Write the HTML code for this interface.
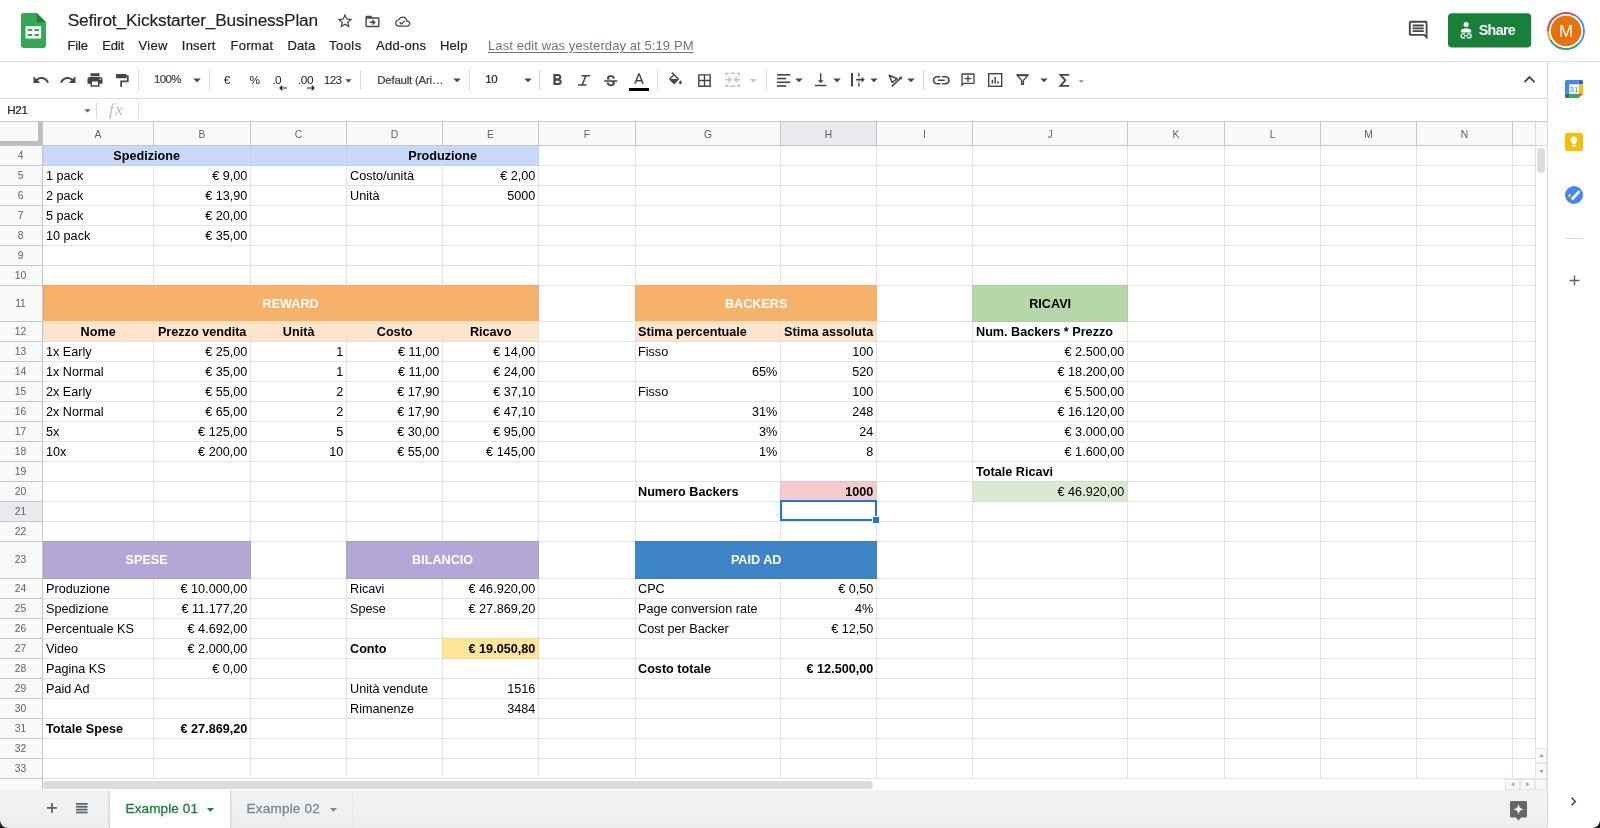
<!DOCTYPE html>
<html lang="en"><head><meta charset="utf-8"><title>Sefirot_Kickstarter_BusinessPlan - Google Sheets</title>
<style>
html,body{margin:0;padding:0}
body{width:1600px;height:828px;overflow:hidden;background:#fff;position:relative;font-family:"Liberation Sans",sans-serif}
.app{position:absolute;left:0;top:0;width:1600px;height:828px;will-change:transform}
.i{position:absolute;display:block;overflow:visible}
.t{position:absolute;white-space:pre;line-height:20px;height:20px}
.sp{position:absolute;top:70px;width:1px;height:20px;background:#dadce0}
.hr{position:absolute;left:0;height:1px;background:#dadce0}
.share{position:absolute;left:1448px;top:13.300px;width:83px;height:34.200px;border-radius:4px;background:#188038}
.sb{position:absolute;background:#f8f9fa;border:1px solid #e3e5e8;box-sizing:border-box}
.tabbar{position:absolute;left:0;top:790px;width:1547px;height:38px;background:linear-gradient(#f1f3f4,#eceef0);overflow:hidden}
.tab1{position:absolute;left:110px;top:0;width:120px;height:38px;background:#fff;box-shadow:0 0 3px rgba(60,64,67,.35)}

.sheet{position:absolute;overflow:hidden;background:#fff}
.sheet div{position:absolute}
.f{box-shadow:inset 0 0 0 1px rgba(0,0,0,.045)}
.hb{background:#f8f9fa}.hs{background:#e8eaed}
.gl{background:#e2e3e3}.hl{background:#c4c7c5}.fz{background:#bdbdbd}
.ch{top:0;height:23px;line-height:25px;text-align:center;font-size:10.3px;color:#5f6368}
.rh{left:0;width:41px;text-align:center;font-size:10.3px;color:#5f6368}
.c{height:19px;line-height:19px;font-size:12.65px;color:#000;white-space:nowrap;box-sizing:border-box;padding:0 2.7px 0 3px}
.al{text-align:left}.ar{text-align:right}.ac{text-align:center}.b{font-weight:700}
.sel{border:2px solid #1a73e8;box-sizing:content-box}
.selh{width:6px;height:6px;background:#1a73e8;border:1px solid #fff;box-sizing:content-box}
</style></head><body><div class="app">
<!-- title bar -->
<svg class="i" style="left:21px;top:13px" width="25" height="35" viewBox="0 0 25 35"><path fill="#34a853" d="M2.4 0H15.700L25 9.300V32.600a2.400 2.400 0 0 1-2.400 2.400H2.400A2.400 2.400 0 0 1 0 32.600V2.400A2.400 2.400 0 0 1 2.400 0z"/><path fill="#188038" d="M15.700 0L25 9.300H17.300a1.600 1.600 0 0 1-1.600-1.600z"/><path fill="#fff" d="M4.600 13.200H20.100V25.400H4.600zM6.700 16h4.600v2H6.700zm6.900 0h4.500v2h-4.500zM6.700 20.900h4.600v2.100H6.700zm6.900 0h4.500v2.100h-4.500z" fill-rule="evenodd"/></svg>
<span class="t" style="left:67.70px;top:9.91px;font-size:17.3px;color:#202124;letter-spacing:-0.162px;-webkit-text-stroke:.15px #202124;">Sefirot_Kickstarter_BusinessPlan</span>
<svg class="i" style="left:335.90px;top:12.40px" width="18" height="18" viewBox="0 0 24 24"><path fill="#444746" d="M22 9.24l-7.19-.62L12 2 9.19 8.63 2 9.24l5.46 4.73L5.82 21 12 17.27 18.18 21l-1.63-7.03L22 9.240zM12 15.400l-3.760 2.270 1-4.280-3.320-2.880 4.380-.38L12 6.100l1.710 4.040 4.380.38-3.320 2.880 1 4.280L12 15.400z"/></svg>
<svg class="i" style="left:364.10px;top:12.50px" width="17" height="17" viewBox="0 0 24 24"><path fill="#444746" d="M20 6h-8l-2-2H4c-1.1 0-1.990.9-1.990 2L2 18c0 1.100.9 2 2 2h16c1.100 0 2-.9 2-2V8c0-1.100-.9-2-2-2zm0 12H4V8h16v10zm-7.500-1l4-4-4-4-1.410 1.410L12.670 12H8v2h4.670l-1.580 1.590L12.500 17z"/></svg>
<svg class="i" style="left:394.60px;top:13.80px" width="15.4" height="15.4" viewBox="0 0 24 24"><path fill="#444746" d="M19.350 10.040C18.670 6.590 15.640 4 12 4 9.110 4 6.600 5.640 5.350 8.040 2.340 8.360 0 10.910 0 14c0 3.310 2.690 6 6 6h13c2.760 0 5-2.240 5-5 0-2.640-2.050-4.780-4.650-4.960zM19 18H6c-2.210 0-4-1.790-4-4 0-2.050 1.530-3.760 3.560-3.970l1.070-.11.500-.95C8.080 7.140 9.940 6 12 6c2.620 0 4.880 1.860 5.390 4.430l.3 1.500 1.530.11c1.560.1 2.780 1.410 2.780 2.960 0 1.650-1.350 3-3 3zm-9-3.820l-2.090-2.090L6.500 13.500 10 17l6.010-6.010-1.410-1.410z"/></svg>
<span class="t" style="left:67.40px;top:35.80px;font-size:13px;color:#202124;letter-spacing:-0.138px;-webkit-text-stroke:.2px #202124;">File</span>
<span class="t" style="left:102.30px;top:35.80px;font-size:13px;color:#202124;letter-spacing:-0.177px;-webkit-text-stroke:.2px #202124;">Edit</span>
<span class="t" style="left:138.60px;top:35.80px;font-size:13px;color:#202124;letter-spacing:0.262px;-webkit-text-stroke:.2px #202124;">View</span>
<span class="t" style="left:181.80px;top:35.80px;font-size:13px;color:#202124;letter-spacing:0.231px;-webkit-text-stroke:.2px #202124;">Insert</span>
<span class="t" style="left:230.40px;top:35.80px;font-size:13px;color:#202124;letter-spacing:0.305px;-webkit-text-stroke:.2px #202124;">Format</span>
<span class="t" style="left:287.50px;top:35.80px;font-size:13px;color:#202124;letter-spacing:0.058px;-webkit-text-stroke:.2px #202124;">Data</span>
<span class="t" style="left:329.00px;top:35.80px;font-size:13px;color:#202124;letter-spacing:0.468px;-webkit-text-stroke:.2px #202124;">Tools</span>
<span class="t" style="left:376.00px;top:35.80px;font-size:13px;color:#202124;letter-spacing:0.268px;-webkit-text-stroke:.2px #202124;">Add-ons</span>
<span class="t" style="left:440.00px;top:35.80px;font-size:13px;color:#202124;letter-spacing:0.213px;-webkit-text-stroke:.2px #202124;">Help</span>
<span class="t" style="left:488.00px;top:35.80px;font-size:13px;color:#70757a;letter-spacing:0.096px;text-decoration:underline;text-underline-offset:2px;">Last edit was yesterday at 5:19 PM</span>
<svg class="i" style="left:1406.80px;top:19.00px" width="22.4" height="22.4" viewBox="0 0 24 24"><path fill="#444746" d="M21.990 4c0-1.100-.89-2-1.990-2H4c-1.100 0-2 .9-2 2v12c0 1.100.9 2 2 2h14l4 4-.01-18zM20 4v13.170L18.830 16H4V4h16zM6 12h12v2H6zm0-3h12v2H6zm0-3h12v2H6z"/></svg>
<svg class="i" style="left:1448px;top:13px" width="84" height="36" viewBox="0 0 84 36"><rect x="0" y=".3" width="83.200" height="34.300" rx="4" fill="#188038"/></svg>
<svg class="i" style="left:1459.80px;top:22.00px" width="12.2" height="16.8" viewBox="0 0 13 18"><circle cx="6.500" cy="2.700" r="2.700" fill="#fff"/><path fill="#fff" d="M1 11.300V9.600c0-1.900 3.700-2.900 5.500-2.900s5.500 1 5.500 2.900v1.700z"/><path fill="none" stroke="#fff" stroke-width="1.300" d="M5.300 12.800H3.300a2.150 2.150 0 0 0 0 4.300h2M7.700 12.800h2a2.150 2.150 0 0 1 0 4.300h-2M4.300 14.950h4.400"/></svg>
<span class="t" style="left:1478.80px;top:20.45px;font-size:14.3px;font-weight:700;color:#fff;letter-spacing:-0.710px;">Share</span>
<svg class="i" style="left:1546.70px;top:11.90px" width="38" height="38" viewBox="0 0 38 38"><circle cx="19" cy="19" r="18" fill="none" stroke="#4285f4" stroke-width="1.700"/><path d="M3.410 28A18 18 0 0 1 1 19" fill="none" stroke="#fbbc04" stroke-width="1.700"/><path d="M1 19A18 18 0 0 1 28 3.410" fill="none" stroke="#ea4335" stroke-width="1.700"/><path d="M31.700 31.700A18 18 0 0 1 3.410 28" fill="none" stroke="#34a853" stroke-width="1.700"/><circle cx="19" cy="19" r="15.200" fill="#e8710a"/><text x="19" y="25" text-anchor="middle" font-family="Liberation Sans, sans-serif" font-size="17" fill="#fff">M</text></svg>
<div class="hr" style="top:61px;width:1600px"></div>
<!-- toolbar -->
<svg class="i" style="left:31.60px;top:70.80px" width="18" height="18" viewBox="0 0 24 24"><path fill="#444746" d="M12.5 8c-2.65 0-5.05.99-6.9 2.6L2 7v9h9l-3.62-3.62c1.39-1.16 3.16-1.88 5.12-1.88 3.54 0 6.55 2.31 7.6 5.5l2.37-.78C21.08 11.03 17.15 8 12.5 8z"/></svg>
<svg class="i" style="left:58.70px;top:70.80px" width="18" height="18" viewBox="0 0 24 24"><path fill="#444746" d="M18.4 10.6C16.55 8.99 14.15 8 11.5 8c-4.65 0-8.58 3.03-9.96 7.22L3.9 16c1.05-3.19 4.05-5.5 7.6-5.5 1.95 0 3.73.72 5.12 1.88L13 16h9V7l-3.6 3.6z"/></svg>
<svg class="i" style="left:85.50px;top:71.00px" width="18" height="18" viewBox="0 0 24 24"><path fill="#444746" d="M19 8H5c-1.66 0-3 1.34-3 3v6h4v4h12v-4h4v-6c0-1.66-1.34-3-3-3zm-3 11H8v-5h8v5zm3-7c-.55 0-1-.45-1-1s.45-1 1-1 1 .45 1 1-.45 1-1 1zm-1-9H6v4h12V3z"/></svg>
<svg class="i" style="left:115.60px;top:73.50px" width="12.6" height="13.1" viewBox="0 0 12.600 13.100"><rect x="0" y="0" width="10.700" height="4.200" rx=".7" fill="#444746"/><path d="M10.600 2.100H11.800V7.300H5.100V13.100" fill="none" stroke="#444746" stroke-width="1.700"/></svg>
<div class="sp" style="left:138px"></div>
<span class="t" style="left:154.00px;top:68.92px;font-size:11.5px;color:#3c4043;letter-spacing:-0.680px;-webkit-text-stroke:.2px #3c4043;">100%</span>
<svg class="i" style="left:188.00px;top:71.33px" width="18" height="18" viewBox="0 0 24 24"><path fill="#444746" d="M7 10l5 5 5-5z"/></svg>
<div class="sp" style="left:209px"></div>
<span class="t" style="left:223.70px;top:70.21px;font-size:11.8px;color:#202124;">€</span>
<span class="t" style="left:249.50px;top:70.21px;font-size:11.8px;color:#202124;letter-spacing:-2.400px;">%</span>
<span class="t" style="left:272.50px;top:70.21px;font-size:11.8px;color:#202124;letter-spacing:-0.672px;">.0</span>
<span class="t" style="left:298.00px;top:70.21px;font-size:11.8px;color:#202124;letter-spacing:-0.469px;">.00</span>
<svg class="i" style="left:279.20px;top:84.60px" width="8" height="6" viewBox="0 0 8 6"><path d="M8 3H1M3.300 .8L1 3l2.300 2.200" fill="none" stroke="#202124" stroke-width="1.200"/></svg>
<svg class="i" style="left:307.30px;top:84.60px" width="8" height="6" viewBox="0 0 8 6"><path d="M0 3H7M4.700 .8L7 3 4.700 5.200" fill="none" stroke="#202124" stroke-width="1.200"/></svg>
<span class="t" style="left:323.80px;top:70.21px;font-size:11.8px;color:#202124;letter-spacing:-0.729px;">123</span>
<svg class="i" style="left:340.50px;top:73.29px" width="15" height="15" viewBox="0 0 24 24"><path fill="#444746" d="M7 10l5 5 5-5z"/></svg>
<div class="sp" style="left:360px"></div>
<span class="t" style="left:377.20px;top:70.22px;font-size:11.5px;color:#3c4043;letter-spacing:-0.233px;-webkit-text-stroke:.2px #3c4043;">Default (Ari…</span>
<svg class="i" style="left:447.50px;top:71.33px" width="18" height="18" viewBox="0 0 24 24"><path fill="#444746" d="M7 10l5 5 5-5z"/></svg>
<div class="sp" style="left:469px"></div>
<span class="t" style="left:485.30px;top:68.92px;font-size:11.5px;color:#202124;letter-spacing:-0.548px;-webkit-text-stroke:.2px #202124;">10</span>
<svg class="i" style="left:518.80px;top:71.33px" width="18" height="18" viewBox="0 0 24 24"><path fill="#444746" d="M7 10l5 5 5-5z"/></svg>
<div class="sp" style="left:539px"></div>
<svg class="i" style="left:547.65px;top:71.25px" width="18.5" height="18.5" viewBox="0 0 24 24"><path fill="#444746" d="M15.6 10.79c.97-.67 1.65-1.77 1.65-2.79 0-2.26-1.75-4-4-4H7v14h7.04c2.09 0 3.71-1.7 3.71-3.79 0-1.52-.86-2.82-2.15-3.42zM10 6.5h3c.83 0 1.5.67 1.5 1.5s-.67 1.5-1.5 1.5h-3v-3zm3.5 9H10v-3h3.5c.83 0 1.5.67 1.5 1.5s-.67 1.5-1.5 1.5z"/></svg>
<svg class="i" style="left:578.00px;top:74.70px" width="12" height="10.8" viewBox="0 0 12 10.800"><path d="M3.500 .8H12M0 10H8.500M7.900 .8L4.100 10" fill="none" stroke="#444746" stroke-width="1.600"/></svg>
<svg class="i" style="left:602.05px;top:72.75px" width="17.5" height="17.5" viewBox="0 0 24 24"><path fill="#444746" d="M7.24 8.75c-.26-.48-.39-1.03-.39-1.67 0-.61.13-1.16.4-1.67.26-.5.63-.93 1.11-1.29.48-.35 1.05-.63 1.7-.83.66-.19 1.39-.29 2.18-.29.81 0 1.54.11 2.21.34.66.22 1.23.54 1.69.94.47.4.83.88 1.08 1.43.25.55.38 1.15.38 1.81h-3.01c0-.31-.05-.59-.15-.85-.09-.27-.24-.49-.44-.68-.2-.19-.45-.33-.75-.44-.3-.1-.66-.16-1.06-.16-.39 0-.74.04-1.03.13-.29.09-.53.21-.72.36-.19.16-.34.34-.44.55-.1.21-.15.43-.15.66 0 .48.25.88.74 1.21.38.25.77.48 1.41.7H7.39c-.05-.08-.11-.17-.15-.25zM21 12v-2H3v2h9.62c.18.07.4.14.55.2.37.17.66.34.87.51.21.17.35.36.43.57.07.2.11.43.11.69 0 .23-.05.45-.14.66-.09.2-.23.38-.42.53-.19.15-.42.26-.71.35-.29.08-.63.13-1.01.13-.43 0-.83-.04-1.18-.13s-.66-.23-.91-.42c-.25-.19-.45-.44-.59-.75-.14-.31-.25-.76-.25-1.21H6.4c0 .55.08 1.13.24 1.58.16.45.37.85.65 1.21.28.35.6.66.98.92.37.26.78.48 1.22.65.44.17.9.3 1.38.39.48.08.96.13 1.44.13.8 0 1.53-.09 2.18-.28s1.21-.45 1.67-.79c.46-.34.82-.77 1.07-1.27s.38-1.07.38-1.71c0-.6-.1-1.14-.31-1.61-.05-.11-.11-.23-.17-.33H21z"/></svg>
<svg class="i" style="left:629.50px;top:70.90px" width="18" height="18" viewBox="0 0 24 24"><path fill="#444746" d="M11 3L5.5 17h2.25l1.12-3h6.25l1.12 3h2.25L13 3h-2zm-1.38 9L12 5.67 14.38 12H9.62z"/></svg>
<div style="position:absolute;left:629px;top:88px;width:20px;height:3px;background:#000"></div>
<div class="sp" style="left:657px"></div>
<svg class="i" style="left:667.40px;top:72.00px" width="17" height="17" viewBox="0 0 24 24"><path fill="#444746" d="M16.56 8.94L7.62 0 6.21 1.41l2.38 2.38-5.15 5.15c-.59.59-.59 1.54 0 2.12l5.5 5.5c.29.29.68.44 1.06.44s.77-.15 1.06-.44l5.5-5.5c.59-.58.59-1.53 0-2.12zM5.21 10L10 5.21 14.79 10H5.21zM19 11.5s-2 2.17-2 3.5c0 1.1.9 2 2 2s2-.9 2-2c0-1.33-2-3.5-2-3.5z"/></svg>
<svg class="i" style="left:695.80px;top:71.50px" width="17" height="17" viewBox="0 0 24 24"><path fill="#444746" d="M3 3v18h18V3H3zm8 16H5v-6h6v6zm0-8H5V5h6v6zm8 8h-6v-6h6v6zm0-8h-6V5h6v6z"/></svg>
<svg class="i" style="left:723.30px;top:70.40px" width="19.4" height="19.4" viewBox="0 0 24 24"><path fill="#c4c7c5" d="M3 3h4v2H5v2H3V3zm6 0h6v2H9V3zm8 0h4v4h-2V5h-2V3zM3 17h2v2h2v2H3v-4zm6 2h6v2H9v-2zm10-2h2v4h-4v-2h2v-2zM3 11h4.2L5.8 9.6 7.2 8.2 11 12l-3.8 3.8-1.4-1.4L7.2 13H3v-2zm18 0h-4.2l1.4-1.400-1.4-1.4L13 12l3.800 3.800 1.400-1.400L16.800 13H21v-2z"/></svg>
<svg class="i" style="left:745.00px;top:71.85px" width="17" height="17" viewBox="0 0 24 24"><path fill="#c4c7c5" d="M7 10l5 5 5-5z"/></svg>
<div class="sp" style="left:766px"></div>
<svg class="i" style="left:776.60px;top:73.65px" width="13.4" height="12.8" viewBox="0 0 13.400 12.800"><rect x="0" y="0" width="13.4" height="1.600" fill="#444746"/><rect x="0" y="3.75" width="9.2" height="1.600" fill="#444746"/><rect x="0" y="7.5" width="13.4" height="1.600" fill="#444746"/><rect x="0" y="11.2" width="9.2" height="1.600" fill="#444746"/></svg>
<svg class="i" style="left:790.40px;top:71.33px" width="18" height="18" viewBox="0 0 24 24"><path fill="#444746" d="M7 10l5 5 5-5z"/></svg>
<svg class="i" style="left:811.95px;top:71.35px" width="17.3" height="17.3" viewBox="0 0 24 24"><path fill="#444746" d="M16 13h-3V3h-2v10H8l4 4 4-4zM4 19v2h16v-2H4z"/></svg>
<svg class="i" style="left:827.60px;top:71.33px" width="18" height="18" viewBox="0 0 24 24"><path fill="#444746" d="M7 10l5 5 5-5z"/></svg>
<svg class="i" style="left:850.60px;top:73.30px" width="13.8" height="13.4" viewBox="0 0 13.800 13.400"><path d="M1 0V13.400" stroke="#444746" stroke-width="2" fill="none"/><path d="M7.900 0V3.300M7.900 4.700V5.500M7.900 8V8.800M7.900 10.100V13.400M5 6.700H11.500" fill="none" stroke="#444746" stroke-width="1.400"/><path fill="#444746" d="M10.600 3.800L13.800 6.700 10.600 9.600z"/></svg>
<svg class="i" style="left:864.75px;top:71.33px" width="18" height="18" viewBox="0 0 24 24"><path fill="#444746" d="M7 10l5 5 5-5z"/></svg>
<svg class="i" style="left:887.90px;top:73.50px" width="14.2" height="13" viewBox="0 0 14.200 13"><g fill="none" stroke="#444746" stroke-width="1.500" stroke-linejoin="round"><path d="M1.200 1.200L9.200 4.700 4.200 8.500z"/><path d="M3.700 12.400L13.200 3.600"/></g><path fill="#444746" d="M14 2.600l-.4 3.300-2.800-2.900z"/></svg>
<svg class="i" style="left:901.90px;top:71.33px" width="18" height="18" viewBox="0 0 24 24"><path fill="#444746" d="M7 10l5 5 5-5z"/></svg>
<div class="sp" style="left:923px"></div>
<svg class="i" style="left:931.15px;top:69.85px" width="20.5" height="20.5" viewBox="0 0 24 24"><path fill="#444746" d="M3.9 12c0-1.71 1.39-3.1 3.1-3.1h4V7H7c-2.76 0-5 2.24-5 5s2.24 5 5 5h4v-1.9H7c-1.71 0-3.1-1.39-3.1-3.1zM8 13h8v-2H8v2zm9-6h-4v1.9h4c1.71 0 3.1 1.39 3.1 3.1s-1.39 3.1-3.1 3.1h-4V17h4c2.76 0 5-2.24 5-5s-2.24-5-5-5z"/></svg>
<svg class="i" style="left:960.25px;top:72.40px" width="16" height="16" viewBox="0 0 24 24"><path fill="#444746" d="M2 4c0-1.1.9-2 2-2h16c1.100 0 2 .9 2 2v12c0 1.100-.9 2-2 2H6l-4 4V4zm2 13.170L5.170 16H20V4H4v13.170zM11 5h2v4h4v2h-4v4h-2v-4H7V9h4z"/></svg>
<svg class="i" style="left:987.50px;top:73.00px" width="14.4" height="14" viewBox="0 0 14.400 14"><rect x=".7" y=".7" width="13" height="12.600" fill="none" stroke="#444746" stroke-width="1.400"/><path d="M4.400 10.600V6.700M7.200 10.600V4M10 10.600V8.300" stroke="#444746" stroke-width="1.500" fill="none"/></svg>
<svg class="i" style="left:1016.00px;top:74.10px" width="13" height="11" viewBox="0 0 13 11"><path d="M.8 .9H12.200L7.400 6.400V10.300H5.600V6.400z" fill="none" stroke="#444746" stroke-width="1.400" stroke-linejoin="round"/><path d="M.5 .4H12.500L11 2.300H2z" fill="#444746"/></svg>
<svg class="i" style="left:1034.50px;top:71.33px" width="18" height="18" viewBox="0 0 24 24"><path fill="#444746" d="M7 10l5 5 5-5z"/></svg>
<svg class="i" style="left:1059.40px;top:73.50px" width="10.4" height="12.6" viewBox="0 0 10.400 12.600"><path d="M10.300 .8H1.400L6.400 6.300 1.400 11.800H10.300" fill="none" stroke="#444746" stroke-width="1.800" stroke-linejoin="miter"/></svg>
<svg class="i" style="left:1074.85px;top:74.69px" width="12.5" height="12.5" viewBox="0 0 24 24"><path fill="#80868b" d="M7 10l5 5 5-5z"/></svg>
<svg class="i" style="left:1518.20px;top:68.00px" width="23" height="23" viewBox="0 0 24 24"><path fill="#444746" d="M7.41 15.41L12 10.83l4.59 4.580L18 14l-6-6-6 6z"/></svg>
<div class="hr" style="top:98px;width:1547px"></div>
<!-- formula bar -->
<span class="t" style="left:7.20px;top:100.28px;font-size:11.6px;color:#202124;letter-spacing:-0.227px;-webkit-text-stroke:.2px #202124;">H21</span>
<svg class="i" style="left:79.70px;top:103.19px" width="15" height="15" viewBox="0 0 24 24"><path fill="#5f6368" d="M7 10l5 5 5-5z"/></svg>
<div style="position:absolute;left:96px;top:102px;width:1px;height:17px;background:#dadce0"></div>
<div style="position:absolute;left:138px;top:102px;width:1px;height:17px;background:#dadce0"></div>
<span class="t" style="left:109px;top:99px;font-family:'Liberation Serif',serif;font-style:italic;font-size:17.500px;color:#bdc1c6;letter-spacing:1.300px">fx</span>
<div class="hr" style="top:121px;width:1547px;background:#c4c7c5"></div>
<!-- grid -->
<div class="sheet" style="left:0;top:122px;width:1536px;height:657px">
<div class="hb" style="left:0;top:0;width:1535px;height:23px"></div>
<div class="hb" style="left:0;top:0;width:42px;height:657px"></div>
<div class="hs" style="left:781px;top:0;width:95px;height:23px"></div>
<div class="hs" style="left:0;top:380px;width:42px;height:19px"></div>
<div class="gl" style="left:153px;top:24px;width:1px;height:633px"></div>
<div class="gl" style="left:250px;top:24px;width:1px;height:633px"></div>
<div class="gl" style="left:346px;top:24px;width:1px;height:633px"></div>
<div class="gl" style="left:442px;top:24px;width:1px;height:633px"></div>
<div class="gl" style="left:538px;top:24px;width:1px;height:633px"></div>
<div class="gl" style="left:635px;top:24px;width:1px;height:633px"></div>
<div class="gl" style="left:780px;top:24px;width:1px;height:633px"></div>
<div class="gl" style="left:876px;top:24px;width:1px;height:633px"></div>
<div class="gl" style="left:972px;top:24px;width:1px;height:633px"></div>
<div class="gl" style="left:1127px;top:24px;width:1px;height:633px"></div>
<div class="gl" style="left:1224px;top:24px;width:1px;height:633px"></div>
<div class="gl" style="left:1320px;top:24px;width:1px;height:633px"></div>
<div class="gl" style="left:1416px;top:24px;width:1px;height:633px"></div>
<div class="gl" style="left:1512px;top:24px;width:1px;height:633px"></div>
<div class="gl" style="left:43px;top:43px;width:1492px;height:1px"></div>
<div class="gl" style="left:43px;top:63px;width:1492px;height:1px"></div>
<div class="gl" style="left:43px;top:83px;width:1492px;height:1px"></div>
<div class="gl" style="left:43px;top:103px;width:1492px;height:1px"></div>
<div class="gl" style="left:43px;top:123px;width:1492px;height:1px"></div>
<div class="gl" style="left:43px;top:143px;width:1492px;height:1px"></div>
<div class="gl" style="left:43px;top:163px;width:1492px;height:1px"></div>
<div class="gl" style="left:43px;top:199px;width:1492px;height:1px"></div>
<div class="gl" style="left:43px;top:219px;width:1492px;height:1px"></div>
<div class="gl" style="left:43px;top:239px;width:1492px;height:1px"></div>
<div class="gl" style="left:43px;top:259px;width:1492px;height:1px"></div>
<div class="gl" style="left:43px;top:279px;width:1492px;height:1px"></div>
<div class="gl" style="left:43px;top:299px;width:1492px;height:1px"></div>
<div class="gl" style="left:43px;top:319px;width:1492px;height:1px"></div>
<div class="gl" style="left:43px;top:339px;width:1492px;height:1px"></div>
<div class="gl" style="left:43px;top:359px;width:1492px;height:1px"></div>
<div class="gl" style="left:43px;top:379px;width:1492px;height:1px"></div>
<div class="gl" style="left:43px;top:399px;width:1492px;height:1px"></div>
<div class="gl" style="left:43px;top:419px;width:1492px;height:1px"></div>
<div class="gl" style="left:43px;top:456px;width:1492px;height:1px"></div>
<div class="gl" style="left:43px;top:476px;width:1492px;height:1px"></div>
<div class="gl" style="left:43px;top:496px;width:1492px;height:1px"></div>
<div class="gl" style="left:43px;top:516px;width:1492px;height:1px"></div>
<div class="gl" style="left:43px;top:536px;width:1492px;height:1px"></div>
<div class="gl" style="left:43px;top:556px;width:1492px;height:1px"></div>
<div class="gl" style="left:43px;top:576px;width:1492px;height:1px"></div>
<div class="gl" style="left:43px;top:596px;width:1492px;height:1px"></div>
<div class="gl" style="left:43px;top:616px;width:1492px;height:1px"></div>
<div class="gl" style="left:43px;top:636px;width:1492px;height:1px"></div>
<div class="gl" style="left:43px;top:656px;width:1492px;height:1px"></div>
<div class="f" style="left:43px;top:23px;width:496px;height:21px;background:#c9daf8"></div>
<div class="f" style="left:43px;top:163px;width:496px;height:37px;background:#f6b26b"></div>
<div class="f" style="left:43px;top:199px;width:496px;height:21px;background:#fce5cd"></div>
<div class="f" style="left:635px;top:163px;width:242px;height:37px;background:#f6b26b"></div>
<div class="f" style="left:635px;top:199px;width:242px;height:21px;background:#fce5cd"></div>
<div class="f" style="left:972px;top:163px;width:156px;height:37px;background:#b6d7a8"></div>
<div class="f" style="left:972px;top:359px;width:156px;height:21px;background:#d9ead3"></div>
<div class="f" style="left:780px;top:359px;width:97px;height:21px;background:#f4cccc"></div>
<div class="f" style="left:43px;top:419px;width:208px;height:38px;background:#b4a7d6"></div>
<div class="f" style="left:346px;top:419px;width:193px;height:38px;background:#b4a7d6"></div>
<div class="f" style="left:635px;top:419px;width:242px;height:38px;background:#3d85c6"></div>
<div class="f" style="left:442px;top:516px;width:97px;height:21px;background:#ffe599"></div>
<div style="left:153px;top:200px;width:1px;height:19px;background:#f3dcc5"></div>
<div style="left:250px;top:200px;width:1px;height:19px;background:#f3dcc5"></div>
<div style="left:346px;top:200px;width:1px;height:19px;background:#f3dcc5"></div>
<div style="left:442px;top:200px;width:1px;height:19px;background:#f3dcc5"></div>
<div style="left:780px;top:200px;width:1px;height:19px;background:#f3dcc5"></div>
<div style="left:250px;top:24px;width:1px;height:19px;background:#c0d1ef"></div>
<div style="left:346px;top:24px;width:1px;height:19px;background:#c0d1ef"></div>
<div class="hl" style="left:42px;top:0;width:1px;height:24px"></div>
<div class="hl" style="left:153px;top:0;width:1px;height:24px"></div>
<div class="hl" style="left:250px;top:0;width:1px;height:24px"></div>
<div class="hl" style="left:346px;top:0;width:1px;height:24px"></div>
<div class="hl" style="left:442px;top:0;width:1px;height:24px"></div>
<div class="hl" style="left:538px;top:0;width:1px;height:24px"></div>
<div class="hl" style="left:635px;top:0;width:1px;height:24px"></div>
<div class="hl" style="left:780px;top:0;width:1px;height:24px"></div>
<div class="hl" style="left:876px;top:0;width:1px;height:24px"></div>
<div class="hl" style="left:972px;top:0;width:1px;height:24px"></div>
<div class="hl" style="left:1127px;top:0;width:1px;height:24px"></div>
<div class="hl" style="left:1224px;top:0;width:1px;height:24px"></div>
<div class="hl" style="left:1320px;top:0;width:1px;height:24px"></div>
<div class="hl" style="left:1416px;top:0;width:1px;height:24px"></div>
<div class="hl" style="left:1512px;top:0;width:1px;height:24px"></div>
<div class="hl" style="left:0;top:23px;width:43px;height:1px"></div>
<div class="hl" style="left:0;top:43px;width:43px;height:1px"></div>
<div class="hl" style="left:0;top:63px;width:43px;height:1px"></div>
<div class="hl" style="left:0;top:83px;width:43px;height:1px"></div>
<div class="hl" style="left:0;top:103px;width:43px;height:1px"></div>
<div class="hl" style="left:0;top:123px;width:43px;height:1px"></div>
<div class="hl" style="left:0;top:143px;width:43px;height:1px"></div>
<div class="hl" style="left:0;top:163px;width:43px;height:1px"></div>
<div class="hl" style="left:0;top:199px;width:43px;height:1px"></div>
<div class="hl" style="left:0;top:219px;width:43px;height:1px"></div>
<div class="hl" style="left:0;top:239px;width:43px;height:1px"></div>
<div class="hl" style="left:0;top:259px;width:43px;height:1px"></div>
<div class="hl" style="left:0;top:279px;width:43px;height:1px"></div>
<div class="hl" style="left:0;top:299px;width:43px;height:1px"></div>
<div class="hl" style="left:0;top:319px;width:43px;height:1px"></div>
<div class="hl" style="left:0;top:339px;width:43px;height:1px"></div>
<div class="hl" style="left:0;top:359px;width:43px;height:1px"></div>
<div class="hl" style="left:0;top:379px;width:43px;height:1px"></div>
<div class="hl" style="left:0;top:399px;width:43px;height:1px"></div>
<div class="hl" style="left:0;top:419px;width:43px;height:1px"></div>
<div class="hl" style="left:0;top:456px;width:43px;height:1px"></div>
<div class="hl" style="left:0;top:476px;width:43px;height:1px"></div>
<div class="hl" style="left:0;top:496px;width:43px;height:1px"></div>
<div class="hl" style="left:0;top:516px;width:43px;height:1px"></div>
<div class="hl" style="left:0;top:536px;width:43px;height:1px"></div>
<div class="hl" style="left:0;top:556px;width:43px;height:1px"></div>
<div class="hl" style="left:0;top:576px;width:43px;height:1px"></div>
<div class="hl" style="left:0;top:596px;width:43px;height:1px"></div>
<div class="hl" style="left:0;top:616px;width:43px;height:1px"></div>
<div class="hl" style="left:0;top:636px;width:43px;height:1px"></div>
<div class="hl" style="left:0;top:656px;width:43px;height:1px"></div>
<div class="hl" style="left:0;top:23px;width:1535px;height:1px"></div>
<div class="hl" style="left:42px;top:0;width:1px;height:657px"></div>
<div class="fz" style="left:38px;top:0;width:4px;height:23px"></div><div class="fz" style="left:0;top:19px;width:42px;height:4px"></div>
<div class="ch" style="left:43px;width:110px">A</div>
<div class="ch" style="left:154px;width:96px">B</div>
<div class="ch" style="left:251px;width:95px">C</div>
<div class="ch" style="left:347px;width:95px">D</div>
<div class="ch" style="left:443px;width:95px">E</div>
<div class="ch" style="left:539px;width:96px">F</div>
<div class="ch" style="left:636px;width:144px">G</div>
<div class="ch" style="left:781px;width:95px">H</div>
<div class="ch" style="left:877px;width:95px">I</div>
<div class="ch" style="left:973px;width:154px">J</div>
<div class="ch" style="left:1128px;width:96px">K</div>
<div class="ch" style="left:1225px;width:95px">L</div>
<div class="ch" style="left:1321px;width:95px">M</div>
<div class="ch" style="left:1417px;width:95px">N</div>
<div class="rh" style="top:24px;height:19px;line-height:19px">4</div>
<div class="rh" style="top:44px;height:19px;line-height:19px">5</div>
<div class="rh" style="top:64px;height:19px;line-height:19px">6</div>
<div class="rh" style="top:84px;height:19px;line-height:19px">7</div>
<div class="rh" style="top:104px;height:19px;line-height:19px">8</div>
<div class="rh" style="top:124px;height:19px;line-height:19px">9</div>
<div class="rh" style="top:144px;height:19px;line-height:19px">10</div>
<div class="rh" style="top:164px;height:35px;line-height:35px">11</div>
<div class="rh" style="top:200px;height:19px;line-height:19px">12</div>
<div class="rh" style="top:220px;height:19px;line-height:19px">13</div>
<div class="rh" style="top:240px;height:19px;line-height:19px">14</div>
<div class="rh" style="top:260px;height:19px;line-height:19px">15</div>
<div class="rh" style="top:280px;height:19px;line-height:19px">16</div>
<div class="rh" style="top:300px;height:19px;line-height:19px">17</div>
<div class="rh" style="top:320px;height:19px;line-height:19px">18</div>
<div class="rh" style="top:340px;height:19px;line-height:19px">19</div>
<div class="rh" style="top:360px;height:19px;line-height:19px">20</div>
<div class="rh" style="top:380px;height:19px;line-height:19px">21</div>
<div class="rh" style="top:400px;height:19px;line-height:19px">22</div>
<div class="rh" style="top:420px;height:36px;line-height:36px">23</div>
<div class="rh" style="top:457px;height:19px;line-height:19px">24</div>
<div class="rh" style="top:477px;height:19px;line-height:19px">25</div>
<div class="rh" style="top:497px;height:19px;line-height:19px">26</div>
<div class="rh" style="top:517px;height:19px;line-height:19px">27</div>
<div class="rh" style="top:537px;height:19px;line-height:19px">28</div>
<div class="rh" style="top:557px;height:19px;line-height:19px">29</div>
<div class="rh" style="top:577px;height:19px;line-height:19px">30</div>
<div class="rh" style="top:597px;height:19px;line-height:19px">31</div>
<div class="rh" style="top:617px;height:19px;line-height:19px">32</div>
<div class="rh" style="top:637px;height:19px;line-height:19px">33</div>
<div class="c ac b" style="left:43px;width:207px;top:25px;">Spedizione</div>
<div class="c ac b" style="left:347px;width:191px;top:25px;">Produzione</div>
<div class="c al" style="left:43px;width:110px;top:45px;">1 pack</div>
<div class="c ar" style="left:154px;width:96px;top:45px;">€ 9,00</div>
<div class="c al" style="left:43px;width:110px;top:65px;">2 pack</div>
<div class="c ar" style="left:154px;width:96px;top:65px;">€ 13,90</div>
<div class="c al" style="left:43px;width:110px;top:85px;">5 pack</div>
<div class="c ar" style="left:154px;width:96px;top:85px;">€ 20,00</div>
<div class="c al" style="left:43px;width:110px;top:105px;">10 pack</div>
<div class="c ar" style="left:154px;width:96px;top:105px;">€ 35,00</div>
<div class="c al" style="left:347px;width:95px;top:45px;">Costo/unità</div>
<div class="c ar" style="left:443px;width:95px;top:45px;">€ 2,00</div>
<div class="c al" style="left:347px;width:95px;top:65px;">Unità</div>
<div class="c ar" style="left:443px;width:95px;top:65px;">5000</div>
<div class="c ac b" style="left:43px;width:495px;top:164px;height:35px;line-height:36px;color:#fff;">REWARD</div>
<div class="c ac b" style="left:636px;width:240px;top:164px;height:35px;line-height:36px;color:#fff;">BACKERS</div>
<div class="c ac b" style="left:973px;width:154px;top:164px;height:35px;line-height:36px;">RICAVI</div>
<div class="c ac b" style="left:43px;width:110px;top:201px;">Nome</div>
<div class="c ac b" style="left:154px;width:96px;top:201px;">Prezzo vendita</div>
<div class="c ac b" style="left:251px;width:95px;top:201px;">Unità</div>
<div class="c ac b" style="left:347px;width:95px;top:201px;">Costo</div>
<div class="c ac b" style="left:443px;width:95px;top:201px;">Ricavo</div>
<div class="c al b" style="left:635px;width:145px;top:201px;">Stima percentuale</div>
<div class="c al b" style="left:781px;width:95px;top:201px;">Stima assoluta</div>
<div class="c al b" style="left:973px;width:154px;top:201px;">Num. Backers * Prezzo</div>
<div class="c al" style="left:43px;width:110px;top:221px;">1x Early</div>
<div class="c ar" style="left:154px;width:96px;top:221px;">€ 25,00</div>
<div class="c ar" style="left:251px;width:95px;top:221px;">1</div>
<div class="c ar" style="left:347px;width:95px;top:221px;">€ 11,00</div>
<div class="c ar" style="left:443px;width:95px;top:221px;">€ 14,00</div>
<div class="c al" style="left:635px;width:145px;top:221px;">Fisso</div>
<div class="c ar" style="left:781px;width:95px;top:221px;">100</div>
<div class="c ar" style="left:973px;width:154px;top:221px;">€ 2.500,00</div>
<div class="c al" style="left:43px;width:110px;top:241px;">1x Normal</div>
<div class="c ar" style="left:154px;width:96px;top:241px;">€ 35,00</div>
<div class="c ar" style="left:251px;width:95px;top:241px;">1</div>
<div class="c ar" style="left:347px;width:95px;top:241px;">€ 11,00</div>
<div class="c ar" style="left:443px;width:95px;top:241px;">€ 24,00</div>
<div class="c ar" style="left:636px;width:144px;top:241px;">65%</div>
<div class="c ar" style="left:781px;width:95px;top:241px;">520</div>
<div class="c ar" style="left:973px;width:154px;top:241px;">€ 18.200,00</div>
<div class="c al" style="left:43px;width:110px;top:261px;">2x Early</div>
<div class="c ar" style="left:154px;width:96px;top:261px;">€ 55,00</div>
<div class="c ar" style="left:251px;width:95px;top:261px;">2</div>
<div class="c ar" style="left:347px;width:95px;top:261px;">€ 17,90</div>
<div class="c ar" style="left:443px;width:95px;top:261px;">€ 37,10</div>
<div class="c al" style="left:635px;width:145px;top:261px;">Fisso</div>
<div class="c ar" style="left:781px;width:95px;top:261px;">100</div>
<div class="c ar" style="left:973px;width:154px;top:261px;">€ 5.500,00</div>
<div class="c al" style="left:43px;width:110px;top:281px;">2x Normal</div>
<div class="c ar" style="left:154px;width:96px;top:281px;">€ 65,00</div>
<div class="c ar" style="left:251px;width:95px;top:281px;">2</div>
<div class="c ar" style="left:347px;width:95px;top:281px;">€ 17,90</div>
<div class="c ar" style="left:443px;width:95px;top:281px;">€ 47,10</div>
<div class="c ar" style="left:636px;width:144px;top:281px;">31%</div>
<div class="c ar" style="left:781px;width:95px;top:281px;">248</div>
<div class="c ar" style="left:973px;width:154px;top:281px;">€ 16.120,00</div>
<div class="c al" style="left:43px;width:110px;top:301px;">5x</div>
<div class="c ar" style="left:154px;width:96px;top:301px;">€ 125,00</div>
<div class="c ar" style="left:251px;width:95px;top:301px;">5</div>
<div class="c ar" style="left:347px;width:95px;top:301px;">€ 30,00</div>
<div class="c ar" style="left:443px;width:95px;top:301px;">€ 95,00</div>
<div class="c ar" style="left:636px;width:144px;top:301px;">3%</div>
<div class="c ar" style="left:781px;width:95px;top:301px;">24</div>
<div class="c ar" style="left:973px;width:154px;top:301px;">€ 3.000,00</div>
<div class="c al" style="left:43px;width:110px;top:321px;">10x</div>
<div class="c ar" style="left:154px;width:96px;top:321px;">€ 200,00</div>
<div class="c ar" style="left:251px;width:95px;top:321px;">10</div>
<div class="c ar" style="left:347px;width:95px;top:321px;">€ 55,00</div>
<div class="c ar" style="left:443px;width:95px;top:321px;">€ 145,00</div>
<div class="c ar" style="left:636px;width:144px;top:321px;">1%</div>
<div class="c ar" style="left:781px;width:95px;top:321px;">8</div>
<div class="c ar" style="left:973px;width:154px;top:321px;">€ 1.600,00</div>
<div class="c al b" style="left:973px;width:154px;top:341px;">Totale Ricavi</div>
<div class="c al b" style="left:635px;width:145px;top:361px;">Numero Backers</div>
<div class="c ar b" style="left:781px;width:95px;top:361px;">1000</div>
<div class="c ar" style="left:973px;width:154px;top:361px;">€ 46.920,00</div>
<div class="c ac b" style="left:43px;width:207px;top:420px;height:36px;line-height:37px;color:#fff;">SPESE</div>
<div class="c ac b" style="left:347px;width:191px;top:420px;height:36px;line-height:37px;color:#fff;">BILANCIO</div>
<div class="c ac b" style="left:636px;width:240px;top:420px;height:36px;line-height:37px;color:#fff;">PAID AD</div>
<div class="c al" style="left:43px;width:110px;top:458px;">Produzione</div>
<div class="c ar" style="left:154px;width:96px;top:458px;">€ 10.000,00</div>
<div class="c al" style="left:43px;width:110px;top:478px;">Spedizione</div>
<div class="c ar" style="left:154px;width:96px;top:478px;">€ 11.177,20</div>
<div class="c al" style="left:43px;width:110px;top:498px;">Percentuale KS</div>
<div class="c ar" style="left:154px;width:96px;top:498px;">€ 4.692,00</div>
<div class="c al" style="left:43px;width:110px;top:518px;">Video</div>
<div class="c ar" style="left:154px;width:96px;top:518px;">€ 2.000,00</div>
<div class="c al" style="left:43px;width:110px;top:538px;">Pagina KS</div>
<div class="c ar" style="left:154px;width:96px;top:538px;">€ 0,00</div>
<div class="c al" style="left:43px;width:110px;top:558px;">Paid Ad</div>
<div class="c al b" style="left:43px;width:110px;top:598px;">Totale Spese</div>
<div class="c ar b" style="left:154px;width:96px;top:598px;">€ 27.869,20</div>
<div class="c al" style="left:347px;width:95px;top:458px;">Ricavi</div>
<div class="c ar" style="left:443px;width:95px;top:458px;">€ 46.920,00</div>
<div class="c al" style="left:347px;width:95px;top:478px;">Spese</div>
<div class="c ar" style="left:443px;width:95px;top:478px;">€ 27.869,20</div>
<div class="c al b" style="left:347px;width:95px;top:518px;">Conto</div>
<div class="c ar b" style="left:443px;width:95px;top:518px;">€ 19.050,80</div>
<div class="c al" style="left:347px;width:95px;top:558px;">Unità vendute</div>
<div class="c ar" style="left:443px;width:95px;top:558px;">1516</div>
<div class="c al" style="left:347px;width:95px;top:578px;">Rimanenze</div>
<div class="c ar" style="left:443px;width:95px;top:578px;">3484</div>
<div class="c al" style="left:635px;width:145px;top:458px;">CPC</div>
<div class="c ar" style="left:781px;width:95px;top:458px;">€ 0,50</div>
<div class="c al" style="left:635px;width:145px;top:478px;">Page conversion rate</div>
<div class="c ar" style="left:781px;width:95px;top:478px;">4%</div>
<div class="c al" style="left:635px;width:145px;top:498px;">Cost per Backer</div>
<div class="c ar" style="left:781px;width:95px;top:498px;">€ 12,50</div>
<div class="c al b" style="left:635px;width:145px;top:538px;">Costo totale</div>
<div class="c ar b" style="left:781px;width:95px;top:538px;">€ 12.500,00</div>
<div class="sel" style="left:780px;top:378px;width:93px;height:17px"></div>
<div class="selh" style="left:872px;top:394px"></div>
</div>
<!-- bottom -->
<div style="position:absolute;left:0;top:779px;width:1547px;height:11px;background:#fff"></div>
<div style="position:absolute;left:0;top:779px;width:42px;height:11px;background:#f8f9fa;border-right:1px solid #c4c7c5"></div>
<div style="position:absolute;left:43px;top:780.500px;width:830px;height:8.500px;border-radius:4.500px;background:#dadce0"></div>
<div class="sb" style="left:1505px;top:779px;width:15px;height:11px"></div>
<div class="sb" style="left:1520px;top:779px;width:15px;height:11px"></div>
<div class="sb" style="left:1535px;top:779px;width:12px;height:11px"></div>
<svg class="i" style="left:1510.90px;top:782.40px" width="3.6" height="4.6" viewBox="0 0 4 6"><path d="M4 0v6L0 3z" fill="#9aa0a6"/></svg>
<svg class="i" style="left:1526.20px;top:782.40px" width="3.6" height="4.6" viewBox="0 0 4 6"><path d="M0 0v6l4-3z" fill="#9aa0a6"/></svg>
<div style="position:absolute;left:1535px;top:122px;width:12px;height:657px;background:#fff;border-left:1px solid #e0e0e0;box-sizing:border-box"></div>
<div style="position:absolute;left:1535px;top:122px;width:12px;height:23px;background:#f8f9fa;border-left:1px solid #dadce0;border-bottom:1px solid #dadce0;box-sizing:content-box;width:11px"></div>
<div style="position:absolute;left:1537.200px;top:148px;width:8px;height:24.500px;border-radius:4px;background:#dadce0"></div>
<div class="sb" style="left:1535px;top:748px;width:12px;height:15px"></div><div class="sb" style="left:1535px;top:763px;width:12px;height:16px"></div>
<svg class="i" style="left:1538.80px;top:753.90px" width="5" height="3" viewBox="0 0 6 4"><path d="M0 4h6L3 0z" fill="#9aa0a6"/></svg>
<svg class="i" style="left:1538.80px;top:769.60px" width="5" height="3" viewBox="0 0 6 4"><path d="M0 0h6L3 4z" fill="#9aa0a6"/></svg>
<div class="tabbar"><div class="tab1"></div></div>
<div style="position:absolute;left:352px;top:791px;width:1px;height:37px;background:#e3e5e8"></div>
<svg class="i" style="left:47.30px;top:803.20px" width="9.8" height="9.8" viewBox="0 0 9.800 9.800"><path d="M4.900 0V9.800M0 4.900H9.800" stroke="#5f6368" stroke-width="1.800" fill="none"/></svg>
<svg class="i" style="left:76.30px;top:803.20px" width="11.6" height="10.4" viewBox="0 0 11.600 10.400"><rect x="0" y="0" width="11.600" height="1.800" fill="#5f6368"/><rect x="0" y="2.87" width="11.600" height="1.800" fill="#5f6368"/><rect x="0" y="5.73" width="11.600" height="1.800" fill="#5f6368"/><rect x="0" y="8.6" width="11.600" height="1.800" fill="#5f6368"/></svg>
<span class="t" style="left:125.60px;top:799.22px;font-size:13.5px;color:#188038;letter-spacing:0.120px;-webkit-text-stroke:.3px #188038;">Example 01</span>
<svg class="i" style="left:201.90px;top:800.55px" width="17" height="17" viewBox="0 0 24 24"><path fill="#188038" d="M7 10l5 5 5-5z"/></svg>
<span class="t" style="left:246.60px;top:799.22px;font-size:13.5px;color:#80868b;letter-spacing:0.210px;-webkit-text-stroke:.3px #80868b;">Example 02</span>
<svg class="i" style="left:325.10px;top:800.55px" width="17" height="17" viewBox="0 0 24 24"><path fill="#80868b" d="M7 10l5 5 5-5z"/></svg>
<svg class="i" style="left:1510.40px;top:800.50px" width="17" height="19.6" viewBox="0 0 17 19.600"><path fill="#666" d="M1.500 0h14a1.500 1.500 0 0 1 1.500 1.500v13.600a1.500 1.500 0 0 1-1.500 1.500H11.300L8.500 19.400 5.700 16.600H1.500A1.500 1.500 0 0 1 0 15.100V1.500A1.500 1.500 0 0 1 1.500 0z"/><path fill="#fff" d="M8.500 2.800C9 6.300 10.500 7.800 14 8.300 10.500 8.800 9 10.300 8.500 13.800 8 10.300 6.500 8.800 3 8.300 6.500 7.800 8 6.300 8.500 2.800z"/></svg>
<svg class="i" style="left:0;top:820px" width="8" height="8" viewBox="0 0 10 10"><path d="M0 0A10 10 0 0 0 10 10H0z" fill="#1b1b1b"/></svg>
<svg class="i" style="left:1592px;top:820px" width="8" height="8" viewBox="0 0 10 10"><path d="M10 0A10 10 0 0 1 0 10H10z" fill="#1b1b1b"/></svg>
<!-- side panel -->
<div style="position:absolute;left:1547px;top:62px;width:1px;height:766px;background:#dadce0"></div>
<svg class="i" style="left:1565.20px;top:79.80px" width="18" height="18" viewBox="0 0 18 18"><rect x="0" y="0" width="18" height="18" rx="1.500" fill="#fff"/><path fill="#4285f4" d="M1.500 0H13.800V4.200H4.200V13.800H0V1.500A1.500 1.500 0 0 1 1.500 0z"/><path fill="#1967d2" d="M13.800 0H16.500A1.500 1.500 0 0 1 18 1.500V4.200H13.800z"/><path fill="#fbbc04" d="M13.800 4.200H18V13.800H13.800z"/><path fill="#34a853" d="M4.200 13.800H13.800V18H4.200z"/><path fill="#188038" d="M0 13.800H4.200V18H1.500A1.500 1.500 0 0 1 0 16.500z"/><path fill="#ea4335" d="M13.800 13.800H18L13.800 18z"/><text x="9" y="12" text-anchor="middle" font-family="Liberation Sans, sans-serif" font-size="8" fill="#4285f4">31</text></svg>
<svg class="i" style="left:1565.00px;top:132.80px" width="18" height="18" viewBox="0 0 18 18"><rect width="18" height="18" rx="2" fill="#fbbc04"/><path fill="#fff" d="M9 3.600a3.400 3.400 0 0 0-1.800 6.300v1.300h3.600V9.900A3.400 3.400 0 0 0 9 3.600zM7.300 12.100h3.400v1.200a.8.800 0 0 1-.8.800H8.100a.8.800 0 0 1-.8-.8z"/></svg>
<svg class="i" style="left:1565.30px;top:186.30px" width="18" height="18" viewBox="0 0 18 18"><circle cx="9" cy="9" r="9" fill="#4285f4"/><circle cx="4.600" cy="9.800" r="1.800" fill="#fbbc04"/><path d="M7.600 12.600L13.800 6" stroke="#fff" stroke-width="2.800" stroke-linecap="round"/></svg>
<div style="position:absolute;left:1565px;top:238px;width:18px;height:1px;background:#dadce0"></div>
<svg class="i" style="left:1565.50px;top:271.50px" width="17" height="17" viewBox="0 0 24 24"><path fill="#5f6368" d="M19 13h-6v6h-2v-6H5v-2h6V5h2v6h6v2z"/></svg>
<svg class="i" style="left:1565.00px;top:792.80px" width="17" height="17" viewBox="0 0 24 24"><path fill="#3c4043" d="M10 6L8.590 7.410 13.170 12l-4.580 4.590L10 18l6-6z"/></svg>
</div></body></html>
